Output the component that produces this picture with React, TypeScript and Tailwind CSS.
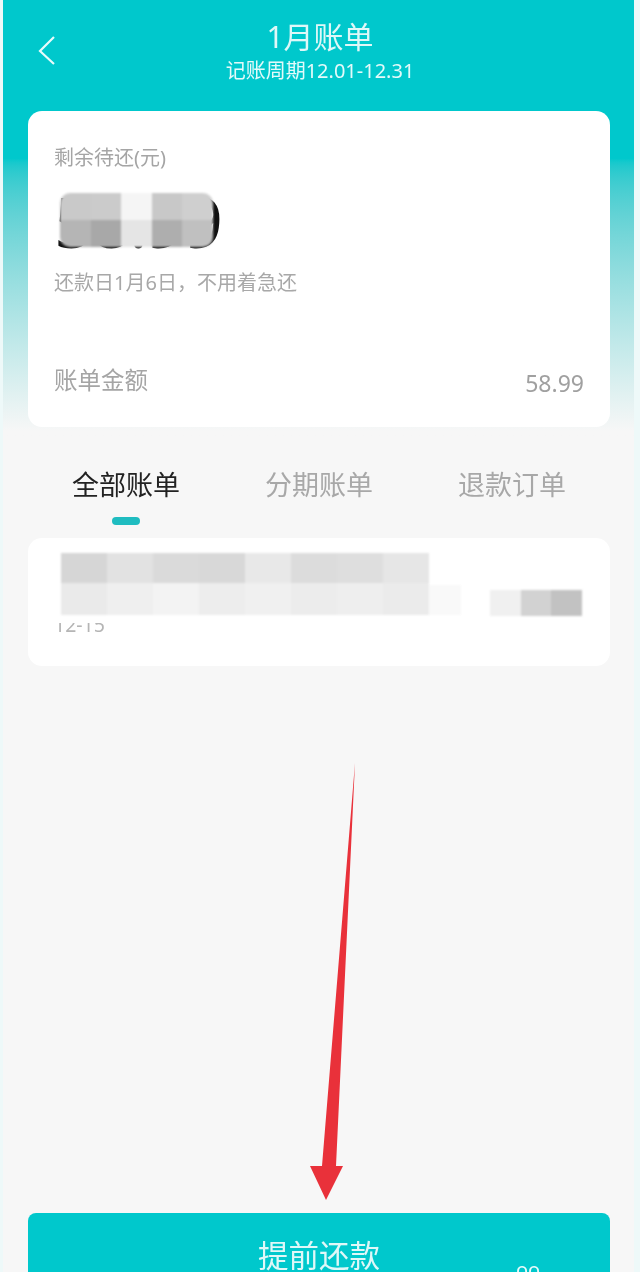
const font = { fontFamily: '"Noto Sans", "Noto Sans CJK SC", sans-serif' };

const amountCells = ['bg-[#c9c9c9]', 'bg-[#cbcbcb]', 'bg-[#f5f5f5]', 'bg-[#c8c8c8]', 'bg-[#cfcfcf]'];
const amountCellsLower = ['bg-[#b5b5b5]', 'bg-[#a8a8a8]', 'bg-[#e5e5e5]', 'bg-[#aeaeae]', 'bg-[#c0c0c0]'];
const rowTop = ['bg-[#d6d6d6]', 'bg-[#e2e2e2]', 'bg-[#dadada]', 'bg-[#d8d8d8]', 'bg-[#e8e8e8]', 'bg-[#dcdcdc]', 'bg-[#dedede]', 'bg-[#e6e6e6]'];
const rowBottom = ['bg-[#eaeaea]', 'bg-[#efefef]', 'bg-[#f3f3f3]', 'bg-[#ededed]', 'bg-[#f0f0f0]', 'bg-[#ececec]', 'bg-[#eeeeee]', 'bg-[#ebebeb]'];

function RedArrow() {
  return (
    <svg className="absolute left-[300px] top-[755px]" width="60" height="450" viewBox="0 0 60 450">
      <path d="M55 8 L36 411 L43 411 L26 445 L10 411 L22 411 Z" fill="#e9313a" />
    </svg>
  );
}

export default function App() {
  return (
    <div style={font} className="relative h-[1272px] w-[640px] overflow-hidden bg-[#f7f7f7] blur-[0.5px]">
      <div className="h-[440px] bg-gradient-to-b from-[#00c8cc] from-[36%] to-[#f7f7f7] to-[98%]" />

      <div className="absolute inset-y-0 left-0 w-[3px] bg-[#eef9f9]" />
      <div className="absolute inset-y-0 right-0 w-[6px] bg-[#eef9f9]" />

      <div className="absolute inset-x-0 top-0 flex flex-col">
        <header className="relative flex h-[111px] flex-col items-center pt-[17px]">
          <svg className="absolute left-[35px] top-[34px]" width="24" height="32" viewBox="0 0 24 32" fill="none">
            <path d="M19 3 L5 17 L19 30" stroke="#e8fbfb" strokeWidth="2.2" />
          </svg>
          <h1 className="text-[30px] leading-[40px] text-[#dff8f8]">1月账单</h1>
          <p className="mt-[2px] text-[20px] leading-[24px] text-[#e2fafa]">记账周期12.01-12.31</p>
        </header>

        <section className="mx-[28px] flex h-[316px] w-[582px] flex-col rounded-[14px] bg-white px-[26px]">
          <p className="mt-[35px] text-[20px] leading-[24px] text-[#a5a5a5]">剩余待还(元)</p>
          <div className="relative mt-[20px] h-[60px] w-[170px]">
            <span className="absolute left-0 top-[-14px] text-[70px] font-normal leading-[90px] tracking-[-2.5px] text-[#111111]">58.99</span>
            <div className="absolute left-[6px] top-[3px] grid h-[54px] w-[153px] grid-cols-5 grid-rows-2 overflow-hidden rounded-[10px] blur-[1px]">
              {amountCells.map((c, i) => <div key={i} className={c} />)}
              {amountCellsLower.map((c, i) => <div key={i} className={c} />)}
            </div>
          </div>
          <p className="mt-[20px] text-[20px] leading-[26px] text-[#a8a8a8]">还款日1月6日，不用着急还</p>
          <div className="mt-[69px] flex items-start justify-between">
            <span className="text-[23.5px] leading-[30px] text-[#a5a5a5]">账单金额</span>
            <span className="mt-[3px] text-[23px] leading-[30px] text-[#a0a0a0]">58.99</span>
          </div>
        </section>

        <nav className="mx-[28px] mt-[40px] flex w-[582px] justify-between px-[44px]">
          <div className="flex flex-col items-center">
            <span className="text-[27px] leading-[36px] text-[#222222]">全部账单</span>
            <span className="mt-[14px] h-[8px] w-[28px] rounded-full bg-[#1fbcc0]" />
          </div>
          <span className="text-[27px] leading-[36px] text-[#a8a8a8]">分期账单</span>
          <span className="text-[27px] leading-[36px] text-[#a8a8a8]">退款订单</span>
        </nav>

        <section className="relative mx-[28px] mt-[13px] h-[128px] w-[582px] rounded-[14px] bg-white">
          <span className="absolute left-[26px] top-[77px] text-[19.5px] leading-[20px] text-[#b5b5b5]">12-15</span>
          <div className="absolute left-[20px] top-[60px] h-[25px] w-[100px] bg-white" />
          <div className="absolute left-[401px] top-[47px] h-[30px] w-[32px] bg-[#f9f9f9] blur-[1px]" />
          <div className="absolute left-[33px] top-[15px] w-[368px] blur-[1px]">
            <div className="grid h-[30px] grid-cols-8">
              {rowTop.map((c, i) => <div key={i} className={c} />)}
            </div>
            <div className="grid h-[32px] grid-cols-8">
              {rowBottom.map((c, i) => <div key={i} className={c} />)}
            </div>
          </div>
          <div className="absolute left-[462px] top-[52px] grid h-[26px] w-[92px] grid-cols-3 blur-[1px]">
            <div className="bg-[#f0f0f0]" />
            <div className="bg-[#d2d2d2]" />
            <div className="bg-[#c2c2c2]" />
          </div>
        </section>
      </div>

      <RedArrow />

      <button className="absolute left-[28px] top-[1213px] flex h-[59px] w-[582px] justify-center rounded-t-[8px] bg-[#00c8cc] pt-[25px] text-[30.5px] leading-[34px] text-[#dff8f8]">
        提前还款
      </button>
      <span className="absolute left-[516px] top-[1262px] text-[20px] leading-[16px] text-[#e8fbfb]">oo</span>
    </div>
  );
}
